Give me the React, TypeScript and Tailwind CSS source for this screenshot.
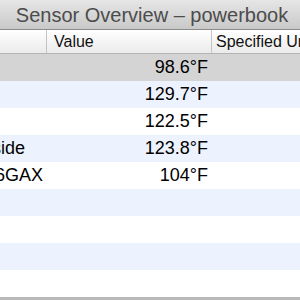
import React from 'react'

const rows = [
  { name: '', value: '98.6°F', bg: 'bg-[#d4d4d4]' },
  { name: '', value: '129.7°F', bg: 'bg-[#edf3fe]' },
  { name: '', value: '122.5°F', bg: 'bg-white' },
  { name: 'Bottomside', value: '123.8°F', bg: 'bg-[#edf3fe]', pad: 'pr-[23px]' },
  { name: 'ATI M6GAX', value: '104°F', bg: 'bg-white', pad: 'pr-[5px]' },
  { name: '', value: '', bg: 'bg-[#edf3fe]' },
  { name: '', value: '', bg: 'bg-white' },
  { name: '', value: '', bg: 'bg-[#edf3fe]' },
  { name: '', value: '', bg: 'bg-white' },
]

const App = () => {
  return (
    <div className="w-[300px] h-[300px] overflow-hidden bg-white flex flex-col font-['Liberation_Sans',sans-serif]">
      {/* title bar */}
      <div className="h-[30px] shrink-0 bg-gradient-to-b from-[#e6e6e6] to-[#c9c9c9] border-b border-[#8c8c8c] flex items-center justify-center">
        <span className="text-[20px] text-[#4c4c4c] whitespace-nowrap ml-[4px] mt-[1px]">Sensor Overview – powerbook</span>
      </div>

      {/* header */}
      <div className="h-[24px] shrink-0 flex bg-gradient-to-b from-white to-[#ebebeb] border-b border-[#b4b4b4] text-[16px] text-[#111]">
        <div className="w-[47px] border-r border-[#c4c4c4]" />
        <div className="w-[165px] border-r border-[#c4c4c4] pl-[7px] flex items-center">Value</div>
        <div className="flex-1 pl-[4px] flex items-center whitespace-nowrap overflow-hidden">Specified Unit</div>
      </div>

      {/* rows */}
      <div className="flex-1 flex flex-col">
        {rows.map((r, i) => (
          <div key={i} className={`h-[27px] shrink-0 flex items-center text-[18px] text-black ${r.bg}`}>
            <div className={`w-[48px] overflow-hidden flex justify-end whitespace-nowrap ${r.pad ?? ''}`}>{r.name}</div>
            <div className="w-[160px] text-right">{r.value}</div>
          </div>
        ))}
      </div>
      <div className="h-[3px] shrink-0 bg-[#b8b8b8]" />
    </div>
  )
}

export default App
